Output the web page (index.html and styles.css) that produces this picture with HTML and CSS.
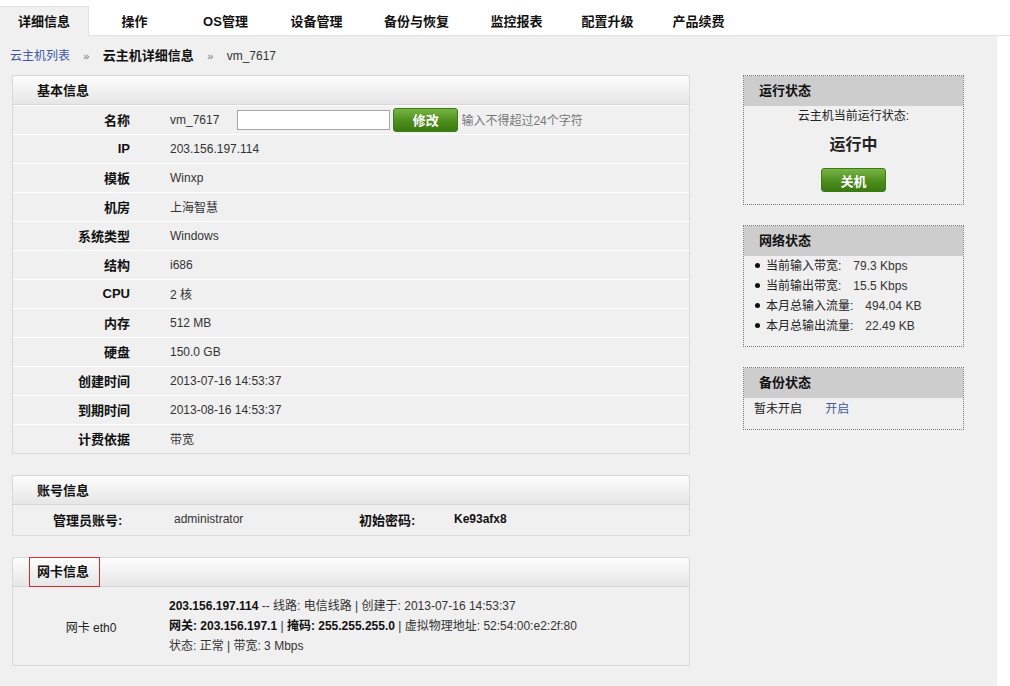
FILE: index.html
```html
<!DOCTYPE html>
<html lang="zh-CN">
<head>
  <meta charset="UTF-8" />
  <title>云主机详细信息</title>
  <link rel="stylesheet" href="styles.css">
</head>
<body>
  <div class="tabs">
    <a class="tab active">详细信息</a>
    <a class="tab">操作</a>
    <a class="tab">OS管理</a>
    <a class="tab">设备管理</a>
    <a class="tab wide">备份与恢复</a>
    <a class="tab">监控报表</a>
    <a class="tab">配置升级</a>
    <a class="tab">产品续费</a>
  </div>

  <div class="page">
    <div class="crumbs">
      <a class="link">云主机列表</a>
      <span class="sep">»</span>
      <b>云主机详细信息</b>
      <span class="sep">»</span>
      <span>vm_7617</span>
    </div>

    <div class="layout">
      <div class="main">
        <div class="panel">
          <div class="panel-head">基本信息</div>
          <div class="info-row">
            <div class="label">名称</div>
            <div class="value">
              vm_7617
              <input type="text" class="name-input">
              <button class="btn">修改</button>
              <span class="hint">输入不得超过24个字符</span>
            </div>
          </div>
          <div class="info-row"><div class="label">IP</div><div class="value">203.156.197.114</div></div>
          <div class="info-row"><div class="label">模板</div><div class="value">Winxp</div></div>
          <div class="info-row"><div class="label">机房</div><div class="value">上海智慧</div></div>
          <div class="info-row"><div class="label">系统类型</div><div class="value">Windows</div></div>
          <div class="info-row"><div class="label">结构</div><div class="value">i686</div></div>
          <div class="info-row"><div class="label">CPU</div><div class="value">2 核</div></div>
          <div class="info-row"><div class="label">内存</div><div class="value">512 MB</div></div>
          <div class="info-row"><div class="label">硬盘</div><div class="value">150.0 GB</div></div>
          <div class="info-row"><div class="label">创建时间</div><div class="value">2013-07-16 14:53:37</div></div>
          <div class="info-row"><div class="label">到期时间</div><div class="value">2013-08-16 14:53:37</div></div>
          <div class="info-row"><div class="label">计费依据</div><div class="value">带宽</div></div>
        </div>

        <div class="panel">
          <div class="panel-head">账号信息</div>
          <div class="account-row">
            <b class="acc-label">管理员账号:</b>
            <span class="acc-value">administrator</span>
            <b class="acc-label2">初始密码:</b>
            <b class="pwd">Ke93afx8</b>
          </div>
        </div>

        <div class="panel">
          <div class="panel-head"><span class="marked">网卡信息</span></div>
          <div class="nic-row">
            <div class="nic-name">网卡 eth0</div>
            <div class="nic-info">
              <div><b>203.156.197.114</b> -- 线路: 电信线路 | 创建于: 2013-07-16 14:53:37</div>
              <div><b>网关: 203.156.197.1</b> | <b>掩码: 255.255.255.0</b> | 虚拟物理地址: 52:54:00:e2:2f:80</div>
              <div>状态: 正常 | 带宽: 3 Mbps</div>
            </div>
          </div>
        </div>

        <div class="panel">
          <div class="panel-head">&nbsp;</div>
        </div>
      </div>

      <div class="side">
        <div class="box">
          <div class="box-head">运行状态</div>
          <div class="box-body center">
            <div>云主机当前运行状态:</div>
            <div class="status">运行中</div>
            <button class="btn block">关机</button>
          </div>
        </div>

        <div class="box">
          <div class="box-head">网络状态</div>
          <ul class="net-list">
            <li>当前输入带宽:<span class="num">79.3 Kbps</span></li>
            <li>当前输出带宽:<span class="num">15.5 Kbps</span></li>
            <li>本月总输入流量:<span class="num">494.04 KB</span></li>
            <li>本月总输出流量:<span class="num">22.49 KB</span></li>
          </ul>
        </div>

        <div class="box">
          <div class="box-head">备份状态</div>
          <div class="box-body backup">
            暂未开启 <a class="link">开启</a>
          </div>
        </div>
      </div>
    </div>
  </div>
</body>
</html>
```

FILE: styles.css
```css
body {
  margin: 0;
  background: #fff;
  font-family: "Liberation Sans", Arial, "Noto Sans CJK SC", sans-serif;
  font-size: 12px;
  color: #222;
  overflow: hidden;
}

.tabs {
  display: flex;
  height: 36px;
  border-bottom: 1px solid #e2e2e2;
  box-sizing: border-box;
  padding-top: 6px;
}

.tab {
  min-width: 91px;
  padding: 1px 19px 0;
  box-sizing: border-box;
  text-align: center;
  line-height: 29px;
  font-size: 13px;
  font-weight: bold;
  color: #111;
}

.tab.wide {
  padding: 1px 22px 0;
}

.tab.active {
  min-width: 88px;
  padding: 1px 18px 0;
  background: #f0f0f0;
  border-top: 1px solid #e2e2e2;
  border-right: 1px solid #e2e2e2;
  line-height: 28px;
  margin-bottom: -1px;
}

.page {
  width: 997px;
  background: #f0f0f0;
  min-height: 650px;
  padding-top: 10px;
}

.crumbs {
  padding-left: 10px;
  height: 20px;
  line-height: 20px;
  color: #333;
}

.crumbs b {
  color: #111;
  font-size: 13px;
}

.sep {
  color: #777;
  font-size: 11px;
  margin: 0 10px;
}

.link {
  color: #3b5aa6;
  cursor: pointer;
}

.layout {
  display: flex;
  margin-top: 9px;
}

.main {
  width: 678px;
  margin-left: 12px;
}

.panel {
  background: #f0f0f0;
  border: 1px solid #d9d9d9;
  border-top: none;
  margin-bottom: 21px;
}

.panel-head {
  height: 30px;
  line-height: 29px;
  padding-left: 24px;
  font-size: 13px;
  font-weight: bold;
  color: #111;
  background: linear-gradient(#fdfdfd, #e6e6e6);
  border-top: 1px solid #d6d6d6;
  border-bottom: 1px solid #d6d6d6;
  border-radius: 3px 3px 0 0;
  box-sizing: border-box;
}

.marked {
  display: inline-block;
  border: 1px solid #d32a2a;
  height: 30px;
  line-height: 28px;
  box-sizing: border-box;
  padding: 0 10px 0 7px;
  margin-left: -8px;
  margin-top: -1px;
  vertical-align: top;
}

.info-row {
  display: flex;
  align-items: center;
  height: 29px;
  padding-bottom: 1px;
  border-top: 1px solid #fff;
  box-sizing: border-box;
}

.label {
  width: 117px;
  text-align: right;
  font-weight: bold;
  font-size: 13px;
  color: #111;
}

.value {
  margin-left: 40px;
  color: #333;
  display: flex;
  align-items: center;
}

.name-input {
  width: 153px;
  height: 20px;
  box-sizing: border-box;
  border: 1px solid #a5a5a5;
  margin: 0 3px 0 18px;
  padding: 0 3px;
}

.btn {
  width: 65px;
  height: 24px;
  border: 1px solid #3c7a12;
  border-radius: 3px;
  background: linear-gradient(#78b446, #4d8e1e 55%, #3b7a10);
  color: #fff;
  font-family: inherit;
  font-size: 13px;
  font-weight: bold;
  padding: 0;
}

.btn.block {
  display: block;
  margin: 0 auto;
}

.hint {
  color: #777;
  margin-left: 3px;
}

.account-row {
  display: flex;
  align-items: center;
  height: 30px;
  padding-bottom: 2px;
  box-sizing: border-box;
  padding-left: 40px;
}

.acc-label {
  width: 121px;
  font-size: 13px;
  color: #111;
}

.acc-value {
  width: 185px;
  color: #333;
}

.acc-label2 {
  width: 95px;
  font-size: 13px;
  color: #111;
}

.pwd {
  color: #111;
}

.nic-row {
  display: flex;
  align-items: center;
  height: 78px;
}

.nic-name {
  width: 156px;
  text-align: center;
}

.nic-info {
  color: #333;
  line-height: 20px;
}

.nic-info b {
  color: #111;
}

.side {
  width: 221px;
  margin-left: 53px;
}

.box {
  border: 1px dotted #777;
  margin-bottom: 20px;
}

.box-head {
  height: 30px;
  line-height: 29px;
  background: #cdcdcd;
  padding-left: 15px;
  font-size: 13px;
  font-weight: bold;
  color: #111;
}

.box-body {
  padding: 2px 10px 12px;
}

.center {
  text-align: center;
  line-height: 16px;
}

.status {
  font-size: 16px;
  font-weight: bold;
  margin: 11px 0 13px;
  line-height: 20px;
}

.backup {
  padding: 1px 10px 10px;
  line-height: 20px;
}

.backup .link {
  margin-left: 20px;
}

.net-list {
  margin: 0;
  padding: 0 0 10px 11px;
  line-height: 20px;
  list-style: none;
}

.net-list li::before {
  content: "";
  display: inline-block;
  width: 5px;
  height: 5px;
  border-radius: 50%;
  background: #111;
  margin-right: 6px;
  vertical-align: 2px;
}

.num {
  margin-left: 12px;
  color: #333;
}
```
